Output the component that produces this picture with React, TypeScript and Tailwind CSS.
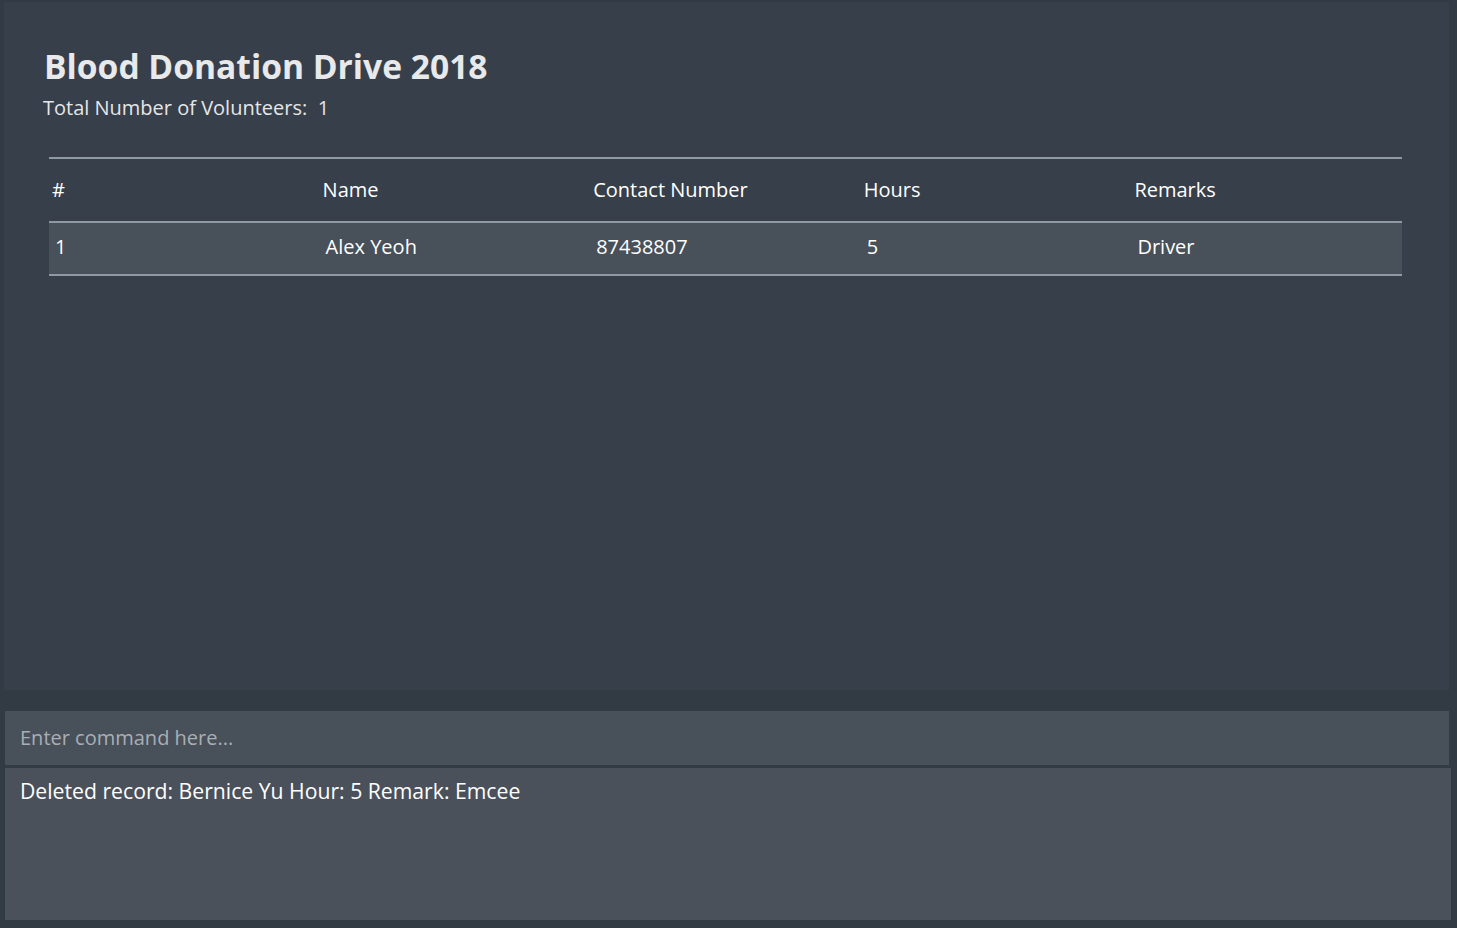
import React from "react";

const font = { fontFamily: '"Open Sans", "Noto Sans", sans-serif' };

export default function App() {
  const headers = ["#", "Name", "Contact Number", "Hours", "Remarks"];
  const row = ["1", "Alex Yeoh", "87438807", "5", "Driver"];
  return (
    <div
      className="w-[1457px] h-[928px] bg-[#323a44] flex flex-col overflow-hidden"
      style={font}
    >
      <div className="ml-[4px] mt-[2px] w-[1445px] h-[688px] bg-[#373f4a] flex flex-col">
        <h1 className="ml-[40px] mt-[44px] text-[33.6px] leading-[40px] font-bold text-[#e8e9ea]">
          Blood Donation Drive 2018
        </h1>
        <div className="ml-[39px] mt-[8px] text-[20px] leading-[28px] text-[#e4e6e8]">
          Total Number of Volunteers:&nbsp;&nbsp;1
        </div>
        <div className="ml-[45px] mt-[35px] w-[1353px] border-t-2 border-[#8d9aa3]">
          <div className="grid grid-cols-5 h-[64px] items-center border-b-2 border-[#8d9aa3]">
            {headers.map((h) => (
              <div key={h} className="pl-[3px] text-[20px] text-white">
                {h}
              </div>
            ))}
          </div>
          <div className="grid grid-cols-5 h-[53px] items-center bg-[#48505a] border-b-2 border-[#8d9aa3]">
            {row.map((c, i) => (
              <div key={i} className="pl-[6px] pb-[4px] text-[20px] text-white">
                {c}
              </div>
            ))}
          </div>
        </div>
      </div>
      <div className="ml-[5px] mt-[21px] w-[1444px] h-[54px] bg-[#48505a] flex items-center pl-[15px] text-[20px] text-[#a9aeb4]">
        Enter command here...
      </div>
      <div className="ml-[5px] mt-[3px] w-[1446px] h-[152px] bg-[#4a515b] pl-[15px] pt-[8px] text-[21.2px] leading-[30px] text-white">
        Deleted record: Bernice Yu Hour: 5 Remark: Emcee
      </div>
    </div>
  );
}
